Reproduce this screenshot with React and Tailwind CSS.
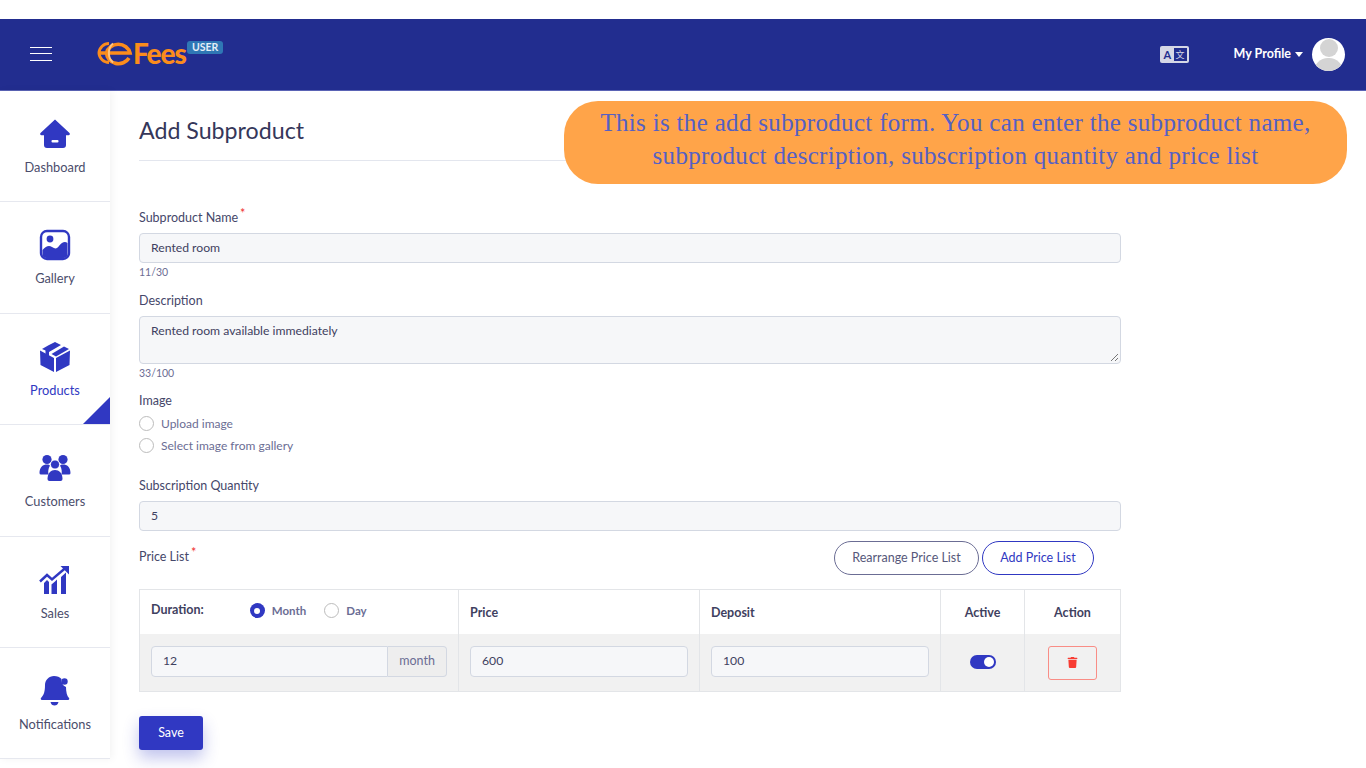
import { FaTrash } from "react-icons/fa";

function HomeIcon() {
  return (
    <svg width="32" height="32" viewBox="0 0 32 32">
      <path d="M16 1.5 L30.5 15 a1.3 1.3 0 0 1 -1 2.2 H27 V27 a3 3 0 0 1 -3 3 H8 a3 3 0 0 1 -3 -3 V17.2 H2.5 a1.3 1.3 0 0 1 -1 -2.2 Z" fill="#3038c2" />
      <rect x="12.5" y="22" width="7" height="2.4" rx="1" fill="#fff" />
    </svg>
  );
}

function GalleryIcon() {
  return (
    <svg width="32" height="32" viewBox="0 0 32 32">
      <rect x="2" y="2" width="28" height="28" rx="6" fill="#fff" stroke="#3038c2" strokeWidth="2.4" />
      <circle cx="11" cy="10" r="3.4" fill="#3038c2" />
      <path d="M3.5 21 C7 17 10 16 13 18 C16 20 18 20 20 17 C23 13 26 12 28.5 14 V25 a4 4 0 0 1 -4 4 H7.5 a4 4 0 0 1 -4 -4 Z" fill="#3038c2" />
    </svg>
  );
}

function BoxIcon() {
  return (
    <svg width="32" height="32" viewBox="0 0 32 32">
      <path d="M1 9.5 L15 17 V31 L1.5 24 Z M31 9.5 L17 17 V31 L30.5 24 Z" fill="#3038c2" />
      <path d="M16 1 L22 4 L10 11 V16.5 L6.5 14.5 V9.5 L3 8 L10 4 Z" fill="#3038c2" />
      <path d="M25 5.5 L30 8 L17 15.5 L12.5 13 Z" fill="#3038c2" />
    </svg>
  );
}

function UsersIcon() {
  return (
    <svg width="32" height="28" viewBox="0 0 32 28">
      <circle cx="8" cy="5.5" r="4.6" fill="#3038c2" />
      <circle cx="24" cy="5.5" r="4.6" fill="#3038c2" />
      <path d="M0.5 19 C0.5 13 4 10.5 8 10.5 C9.5 10.5 10.5 11 11 11.5 C9 15 9 18 9.5 20.5 H2 a1.5 1.5 0 0 1 -1.5 -1.5 Z" fill="#3038c2" />
      <path d="M31.5 19 C31.5 13 28 10.5 24 10.5 C22.5 10.5 21.5 11 21 11.5 C23 15 23 18 22.5 20.5 H30 a1.5 1.5 0 0 0 1.5 -1.5 Z" fill="#3038c2" />
      <circle cx="16" cy="10.5" r="4.6" fill="#3038c2" stroke="#fff" strokeWidth="1" />
      <path d="M8.5 25 C8.5 19 12 16 16 16 C20 16 23.5 19 23.5 25 a2 2 0 0 1 -2 2 H10.5 a2 2 0 0 1 -2 -2 Z" fill="#3038c2" />
    </svg>
  );
}

function SalesIcon() {
  return (
    <svg width="32" height="30" viewBox="0 0 32 30">
      <path d="M1 16.5 L8 10 L13 14.5 L27 2.5" fill="none" stroke="#3038c2" strokeWidth="2.4" />
      <path d="M21.5 1 H30 V9.5 Z" fill="#3038c2" />
      <path d="M5 18 L8 15 L10 17 V29 H5 Z M13 19 L16 16.5 L18 14.5 V29 H12.5 V19.5 Z M22 12 L27 7.5 V29 H22 Z" fill="#3038c2" />
    </svg>
  );
}

function BellIcon() {
  return (
    <svg width="30" height="32" viewBox="0 0 30 32">
      <path d="M14 1 C17 1 20 2 21.5 4 A7 7 0 0 0 26 12 C26 17 27 21 29 23 a1.2 1.2 0 0 1 -1 2 H2 a1.2 1.2 0 0 1 -1 -2 C4 20 5 16 5 10 C5 5 9 1 14 1 Z" fill="#3038c2" />
      <circle cx="24.5" cy="6.5" r="3.2" fill="#3038c2" />
      <path d="M10.5 27 H18.5 C18 29.5 16.5 30.5 14.5 30.5 C12.5 30.5 11 29.5 10.5 27 Z" fill="#3038c2" />
    </svg>
  );
}

// globe shaped "e" of the logo
function LogoMark() {
  return (
    <svg width="36" height="26" viewBox="0 0 36 26">
      <path d="M9.5 13 A12 11 0 0 1 33 13 H2 M9.5 13 A12 11 0 0 0 32 18" fill="none" stroke="#fb8c1c" strokeWidth="3.6" />
      <path d="M2 13 A10 10 0 0 1 12 3.5 M2 13 A10 10 0 0 0 12 22.5" fill="none" stroke="#fb8c1c" strokeWidth="3" />
      <path d="M16 3.5 C10.5 8 10.5 18 16 22.5" fill="none" stroke="#fdc27c" strokeWidth="2" />
    </svg>
  );
}

const navItems = [
  { label: "Dashboard", icon: <HomeIcon /> },
  { label: "Gallery", icon: <GalleryIcon /> },
  { label: "Products", icon: <BoxIcon />, active: true },
  { label: "Customers", icon: <UsersIcon /> },
  { label: "Sales", icon: <SalesIcon /> },
  { label: "Notifications", icon: <BellIcon /> },
];

function Header() {
  return (
    <header className="flex h-[72px] items-center border-b border-[#5a63b5] bg-[#222d8f]">
      <div className="mb-[2px] ml-[30px] flex w-[22px] flex-col gap-[5.5px]">
        <div className="h-[1px] bg-white" />
        <div className="h-[1px] bg-white" />
        <div className="h-[1px] bg-white" />
      </div>
      <div className="mb-[3px] ml-[45px] flex items-center">
        <LogoMark />
        <span className="text-[28px] leading-none font-black tracking-[-1px] text-[#fb8c1c]">Fees</span>
      </div>
      <span className="mb-[14px] ml-[1px] rounded-[3px] bg-[#2f77b5] px-[5px] py-[1px] text-[10.5px] leading-[11px] font-bold text-[#e6eef7]">USER</span>
      <div className="ml-auto flex items-center">
        <div className="flex h-[17px] w-[29px] items-center justify-between rounded-[2px] bg-[#d5d7e6] p-[2px] pl-[4px]">
          <span className="text-[11px] leading-none font-bold text-[#222d8f]">A</span>
          <span className="flex h-[13px] w-[13px] items-center justify-center bg-[#222d8f] text-[9px] leading-none text-[#d5d7e6] font-['Noto_Sans_CJK_SC',sans-serif]">文</span>
        </div>
        <span className="ml-[45px] text-[12.5px] font-bold text-white">My Profile</span>
        <span className="ml-[4px] h-0 w-0 border-x-[4px] border-t-[5px] border-x-transparent border-t-white" />
        <div className="relative ml-[9px] mr-[21px] h-[33px] w-[33px] overflow-hidden rounded-full bg-white">
          <div className="absolute left-[8px] top-[1px] h-[18px] w-[18px] rounded-full bg-[#d4d4d4]" />
          <div className="absolute left-[2px] top-[20px] h-[20px] w-[29px] rounded-t-[14px] bg-[#d4d4d4]" />
        </div>
      </div>
    </header>
  );
}

function Sidebar() {
  return (
    <aside className="relative z-10 w-[110px] shrink-0 bg-white shadow-[2px_0_8px_rgba(0,0,0,0.05)]">
      {navItems.map((item) => (
        <div key={item.label} className="relative flex h-[111.4px] flex-col items-center border-b border-[#e6e8ef] pt-[27px]">
          <div className="flex h-[32px] items-center justify-center">{item.icon}</div>
          <span className={`mt-[8px] text-[12.8px] leading-[18px] ${item.active ? "text-[#3038c2]" : "text-[#4b4d6b]"}`}>{item.label}</span>
          {item.active && (
            <div className="absolute bottom-0 right-0 h-0 w-0 border-b-[27px] border-l-[27px] border-b-[#3038c2] border-l-transparent" />
          )}
        </div>
      ))}
    </aside>
  );
}

function Radio({ checked, label, labelClass = "text-[12px] font-normal" }) {
  return (
    <div className="flex items-center gap-[7px]">
      {checked ? (
        <span className="flex h-[15px] w-[15px] items-center justify-center rounded-full bg-[#3038c2]">
          <span className="h-[6px] w-[6px] rounded-full bg-white" />
        </span>
      ) : (
        <span className="h-[15px] w-[15px] rounded-full border border-[#bcbcbc] bg-white" />
      )}
      <span className={`text-[#6b6d94] ${labelClass}`}>{label}</span>
    </div>
  );
}

const inputBox = "rounded-[4px] border border-[#d3d8e2] bg-[#f6f7f9] text-[12.2px] text-[#3f4160]";

function PriceTable() {
  return (
    <div className="mt-[14px] grid grid-cols-[319px_241px_241px_84px_95px] border border-[#e3e5e8] text-[12.5px] text-[#3f4160]">
      <div className="flex h-[44px] items-center border-r border-[#e3e5e8] pb-[3px] pl-[11px]">
        <span className="font-bold">Duration:</span>
        <div className="ml-[46px]"><Radio checked label="Month" labelClass="text-[11.5px] font-bold" /></div>
        <div className="ml-[18px]"><Radio label="Day" labelClass="text-[11.5px] font-bold" /></div>
      </div>
      <div className="flex h-[44px] items-center border-r border-[#e3e5e8] pl-[11px] pt-[3px] font-bold">Price</div>
      <div className="flex h-[44px] items-center border-r border-[#e3e5e8] pl-[11px] pt-[3px] font-bold">Deposit</div>
      <div className="flex h-[44px] items-center justify-center border-r border-[#e3e5e8] pt-[3px] font-bold">Active</div>
      <div className="flex h-[44px] items-center justify-center pt-[3px] font-bold">Action</div>

      <div className="flex h-[57px] items-center border-r border-[#e3e5e8] bg-[#f1f1f1] px-[11px] pb-[3px]">
        <div className={`flex h-[31px] flex-1 items-center rounded-r-none pl-[11px] ${inputBox}`}>12</div>
        <div className="flex h-[31px] w-[59px] items-center justify-center rounded-r-[4px] border border-l-0 border-[#d3d8e2] bg-[#eeeeee] text-[#6b6d94]">month</div>
      </div>
      <div className="flex h-[57px] items-center border-r border-[#e3e5e8] bg-[#f1f1f1] px-[11px] pb-[3px]">
        <div className={`flex h-[31px] w-full items-center pl-[11px] ${inputBox}`}>600</div>
      </div>
      <div className="flex h-[57px] items-center border-r border-[#e3e5e8] bg-[#f1f1f1] px-[11px] pb-[3px]">
        <div className={`flex h-[31px] w-full items-center pl-[11px] ${inputBox}`}>100</div>
      </div>
      <div className="flex h-[57px] items-center justify-center border-r border-[#e3e5e8] bg-[#f1f1f1] pb-[1px]">
        <div className="flex h-[14px] w-[26px] items-center justify-end rounded-full bg-[#3038c2] pr-[2px]">
          <span className="h-[10px] w-[10px] rounded-full bg-white" />
        </div>
      </div>
      <div className="flex h-[57px] items-center justify-center bg-[#f1f1f1]">
        <div className="flex h-[34px] w-[49px] items-center justify-center rounded-[3px] border border-[#f98d86] text-[11px] text-[#f83c33]">
          <FaTrash />
        </div>
      </div>
    </div>
  );
}

function Form() {
  return (
    <main className="relative min-w-0 flex-1 bg-white pl-[29px] pr-[245px]">
      <h1 className="flex h-[70px] items-end border-b border-[#e3e6ee] pb-[15px] text-[23.2px] leading-[30px] font-normal text-[#35375a]">Add Subproduct</h1>

      <div className="mt-[48px] text-[12.5px] leading-[18px] text-[#45476a]">
        Subproduct Name<span className="relative -top-[4px] ml-[2px] text-[#f03030]">*</span>
      </div>
      <div className={`mt-[6px] flex h-[30px] items-center pl-[11px] ${inputBox}`}>Rented room</div>
      <div className="mt-[2px] text-[10.5px] leading-[14px] text-[#6b6d94]">11/30</div>

      <div className="mt-[13px] text-[12.5px] leading-[18px] text-[#45476a]">Description</div>
      <div className={`relative mt-[6px] h-[48px] pl-[11px] pt-[6px] leading-[16px] ${inputBox}`}>
        Rented room available immediately
        <svg className="absolute bottom-[1px] right-[1px]" width="9" height="9" viewBox="0 0 9 9">
          <path d="M8 1 L1 8 M8 5 L5 8" stroke="#777" strokeWidth="1" />
        </svg>
      </div>
      <div className="mt-[2px] text-[10.5px] leading-[14px] text-[#6b6d94]">33/100</div>

      <div className="mt-[12px] text-[12.5px] leading-[18px] text-[#45476a]">Image</div>
      <div className="mt-[5px] flex flex-col gap-[5px] leading-[17px]">
        <Radio label="Upload image" />
        <Radio label="Select image from gallery" />
      </div>

      <div className="mt-[23px] text-[12.5px] leading-[18px] text-[#45476a]">Subscription Quantity</div>
      <div className={`mt-[6px] flex h-[30px] items-center pl-[11px] ${inputBox}`}>5</div>

      <div className="mt-[10px] flex items-center">
        <div className="mb-[3px] text-[12.5px] leading-[18px] text-[#45476a]">
          Price List<span className="relative -top-[4px] ml-[2px] text-[#f03030]">*</span>
        </div>
        <div className="ml-auto mr-[27px] flex gap-[3px]">
          <button className="h-[34px] w-[145px] rounded-full border border-[#6b6d94] text-[12.5px] text-[#56587a]">Rearrange Price List</button>
          <button className="h-[34px] w-[112px] rounded-full border border-[#3038c2] text-[12.5px] text-[#3038c2]">Add Price List</button>
        </div>
      </div>

      <PriceTable />

      <button className="mt-[24px] h-[34px] w-[64px] rounded-[3px] bg-[#3038c2] text-[12.5px] text-white shadow-[0_8px_16px_rgba(48,56,194,0.3)]">Save</button>

      <div className="absolute left-[454px] top-[10px] flex h-[83px] w-[783px] items-center justify-center rounded-[34px] bg-[#ffa449] pb-[8px] text-center text-[25px] leading-[33px] tracking-[0.32px] text-[#5560c4] font-['Liberation_Serif',serif]">
        <p>This is the add subproduct form. You can enter the subproduct name,<br />subproduct description, subscription quantity and price list</p>
      </div>
    </main>
  );
}

export default function App() {
  return (
    <div className="h-[768px] overflow-hidden bg-white pt-[19px] font-['Lato',sans-serif]">
      <Header />
      <div className="flex">
        <Sidebar />
        <Form />
      </div>
    </div>
  );
}
